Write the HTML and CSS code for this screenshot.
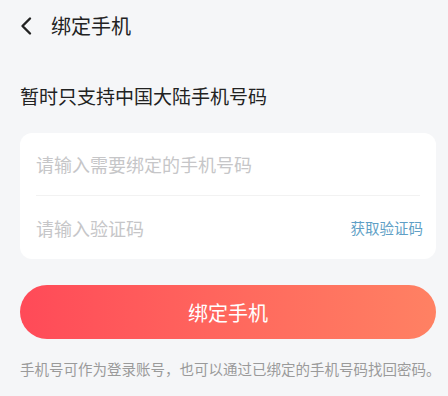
FILE: index.html
```html
<!DOCTYPE html>
<html lang="zh-CN">
<head>
<meta charset="utf-8">
<link rel="stylesheet" href="styles.css">
</head>
<body>
<div class="page">
  <header class="topbar">
    <svg class="back" width="14" height="20" viewBox="0 0 14 20"><path d="M11 2.5 L3.5 10 L11 17.5" fill="none" stroke="#222" stroke-width="2.4" stroke-linecap="round" stroke-linejoin="round"/></svg>
    <span class="title">绑定手机</span>
  </header>
  <main class="content">
    <p class="subtitle">暂时只支持中国大陆手机号码</p>
    <div class="card">
      <div class="row row-first">
        <span class="placeholder">请输入需要绑定的手机号码</span>
      </div>
      <div class="row">
        <span class="placeholder">请输入验证码</span>
        <span class="getcode">获取验证码</span>
      </div>
    </div>
    <button class="submit">绑定手机</button>
    <p class="note">手机号可作为登录账号，也可以通过已绑定的手机号码找回密码。</p>
  </main>
</div>
</body>
</html>
```
FILE: styles.css
```css
html, body {
  margin: 0;
  padding: 0;
  background: #f5f6f8;
  font-family: "Noto Sans CJK SC", "Noto Sans", sans-serif;
}
.page {
  width: 448px;
  height: 396px;
  overflow: hidden;
}
.topbar {
  height: 51px;
  display: flex;
  align-items: center;
  padding: 0 0 0 19px;
}
.back {
  display: block;
  margin-right: 18px;
}
.title {
  font-size: 20px;
  line-height: 28px;
  color: #222;
}
.content {
  padding: 0 12px 0 20px;
}
.subtitle {
  margin: 31px 0 0;
  font-size: 19px;
  line-height: 28px;
  color: #222;
}
.card {
  margin-top: 23px;
  background: #fff;
  border-radius: 12px;
  width: 416px;
}
.row {
  height: 63px;
  margin: 0 16px;
  display: flex;
  align-items: center;
  justify-content: space-between;
}
.row-first {
  border-bottom: 1px solid #f2f2f2;
  height: 62px;
}
.placeholder {
  font-size: 18px;
  line-height: 26px;
  color: #c6c6c8;
}
.getcode {
  font-size: 14.5px;
  line-height: 20px;
  color: #5f9fc6;
  margin-right: -3px;
}
.submit {
  display: block;
  margin-top: 26px;
  width: 416px;
  height: 54px;
  border: none;
  border-radius: 27px;
  background: linear-gradient(90deg, #ff4a58 0%, #ff6a5e 55%, #ff8163 100%);
  color: #fff;
  font-family: inherit;
  font-size: 20px;
  padding: 0;
}
.note {
  margin: 20px 0 0;
  font-size: 14.5px;
  line-height: 20px;
  color: #9a9a9a;
  white-space: nowrap;
}
```
